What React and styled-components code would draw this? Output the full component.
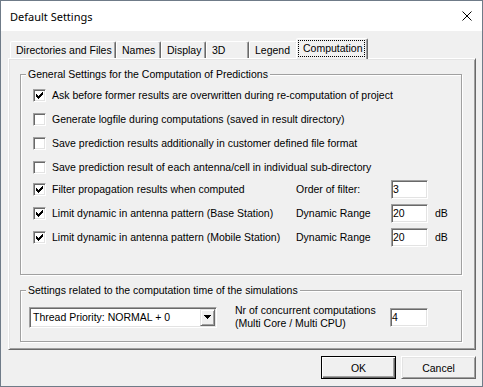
import React from 'react';
import styled, { createGlobalStyle } from 'styled-components';

const GlobalStyle = createGlobalStyle`
  html, body {
    margin: 0;
    padding: 0;
    background: #fff;
  }
  body {
    font-family: "Liberation Sans", Arial, sans-serif;
    font-size: 10.5px;
    color: #000;
  }
`;

const Window = styled.div`
  width: 483px;
  height: 387px;
  box-sizing: border-box;
  border: 1px solid #6f7b88;
  display: flex;
  flex-direction: column;
  background: #f0f0f0;
`;

const TitleBar = styled.div`
  height: 30px;
  flex: none;
  background: #fff;
  display: flex;
  align-items: center;
  justify-content: space-between;
  padding: 0 10px 0 9px;
`;

const Title = styled.span`
  font-family: "Noto Sans", "Open Sans", sans-serif;
  font-size: 11px;
  color: #000;
`;

const CloseIcon = () => (
  <svg width="10" height="10" viewBox="0 0 10 10">
    <path d="M0.5 0.5L9.5 9.5M9.5 0.5L0.5 9.5" stroke="#000" strokeWidth="1" />
  </svg>
);

const Body = styled.div`
  flex: 1;
  display: flex;
  flex-direction: column;
  padding: 6px 6px 7px 7px;
`;

const TabStrip = styled.div`
  height: 21px;
  display: flex;
  align-items: flex-end;
  padding-left: 2px;
  position: relative;
  z-index: 1;
`;

const Tab = styled.div`
  width: ${p => p.$w}px;
  height: ${p => (p.$active ? 21 : 17)}px;
  box-sizing: border-box;
  flex: none;
  border: 1px solid;
  border-bottom: none;
  border-color: #fff #696969 transparent #fff;
  border-radius: 2px 2px 0 0;
  box-shadow: inset -1px 0 #a0a0a0;
  background: #f0f0f0;
  padding-left: ${p => (p.$active ? 1 : 5)}px;
  line-height: 16px;
  white-space: nowrap;
  margin: ${p => (p.$active ? '0 -2px -1px -2px' : '0')};
  position: relative;
  z-index: ${p => (p.$active ? 2 : 1)};
`;

const FocusLabel = styled.span`
  display: block;
  margin: 1px 2px 0 0;
  height: 17px;
  box-sizing: border-box;
  border: 1px dotted #000;
  padding-left: 4px;
  line-height: 15px;
`;

const Panel = styled.div`
  height: 292px;
  box-sizing: border-box;
  border: 1px solid;
  border-color: #fff #696969 #696969 #fff;
  box-shadow: inset 1px 1px #e3e3e3, inset -1px -1px #a0a0a0;
  padding: 15px 0 0 11px;
  display: flex;
  flex-direction: column;
  gap: 15px;
`;

const GroupBox = styled.div`
  width: 442px;
  height: ${p => p.$h}px;
  box-sizing: border-box;
  border: 1px solid #a0a0a0;
  box-shadow: inset 1px 1px #fff, 1px 1px #fff;
  display: flex;
  flex-direction: column;
`;

const GroupTitle = styled.div`
  align-self: flex-start;
  margin: -7px 0 0 5px;
  padding: 0 2px;
  line-height: 13px;
  background: #f0f0f0;
  white-space: nowrap;
`;

const GroupContent = styled.div`
  display: flex;
  flex-direction: column;
  padding: ${p => p.$pad};
`;

const Row = styled.div`
  height: ${p => p.$h || 24}px;
  display: flex;
  align-items: center;
  white-space: nowrap;
`;

const RowSet = styled.div`
  display: flex;
  flex-direction: column;
  margin-top: -2px;
`;

const Box = styled.span`
  width: 13px;
  height: 13px;
  box-sizing: border-box;
  flex: none;
  background: #fff;
  border: 1px solid;
  border-color: #a0a0a0 #fff #fff #a0a0a0;
  box-shadow: inset 1px 1px #696969, inset -1px -1px #e3e3e3;
  display: flex;
  align-items: center;
  justify-content: center;
`;

const CheckLabel = styled.span`
  margin-left: 6px;
`;

const CheckCell = styled.div`
  width: 263px;
  display: flex;
  align-items: center;
`;

const FieldLabel = styled.span`
  width: 95px;
  flex: none;
`;

const Edit = styled.div`
  width: ${p => p.$w || 37}px;
  height: 19px;
  box-sizing: border-box;
  flex: none;
  background: #fff;
  border: 1px solid;
  border-color: #a0a0a0 #fff #fff #a0a0a0;
  box-shadow: inset 1px 1px #696969, inset -1px -1px #e3e3e3;
  padding-left: 1px;
  line-height: 17px;
`;

const Unit = styled.span`
  margin-left: 7px;
`;

const Combo = styled.div`
  width: 188px;
  height: 21px;
  box-sizing: border-box;
  flex: none;
  background: #fff;
  border: 1px solid;
  border-color: #a0a0a0 #fff #fff #a0a0a0;
  box-shadow: inset 1px 1px #696969, inset -1px -1px #e3e3e3;
  display: flex;
  align-items: center;
  justify-content: space-between;
  padding: 1px 1px 1px 3px;
`;

const DropButton = styled.span`
  width: 15px;
  height: 17px;
  box-sizing: border-box;
  background: #f0f0f0;
  border: 1px solid;
  border-color: #e3e3e3 #696969 #696969 #e3e3e3;
  box-shadow: inset 1px 1px #fff, inset -1px -1px #a0a0a0;
  display: flex;
  align-items: center;
  justify-content: center;
`;

const TwoLine = styled.div`
  width: 155px;
  margin-left: 18px;
  line-height: 13px;
`;

const ButtonRow = styled.div`
  display: flex;
  justify-content: flex-end;
  gap: 5px;
  margin-top: 6px;
`;

const Button = styled.button`
  width: 75px;
  height: 23px;
  box-sizing: border-box;
  padding: 0;
  font-family: "Liberation Sans", Arial, sans-serif;
  font-size: 10.5px;
  color: #000;
  background: #f0f0f0;
  border: 1px solid;
  border-color: ${p => (p.$default ? '#000' : '#fff #696969 #696969 #fff')};
  box-shadow: ${p =>
    p.$default
      ? 'inset 1px 1px #fff, inset -1px -1px #696969, inset -2px -2px #a0a0a0'
      : 'inset 1px 1px #e3e3e3, inset -1px -1px #a0a0a0'};
`;

const CheckMark = () => (
  <svg width="7" height="7" viewBox="0 0 7 7" shapeRendering="crispEdges">
    <path
      d="M0 2h1v3H0z M1 3h1v3H1z M2 4h1v3H2z M3 3h1v3H3z M4 2h1v3H4z M5 1h1v3H5z M6 0h1v3H6z"
      fill="#000"
    />
  </svg>
);

const Arrow = () => (
  <svg width="7" height="4" viewBox="0 0 7 4" shapeRendering="crispEdges">
    <path d="M0 0h7v1H0z M1 1h5v1H1z M2 2h3v1H2z M3 3h1v1H3z" fill="#000" />
  </svg>
);

const Check = ({ checked, children }) => (
  <CheckCell>
    <Box>{checked && <CheckMark />}</Box>
    <CheckLabel>{children}</CheckLabel>
  </CheckCell>
);

const tabs = [
  { label: 'Directories and Files', w: 106 },
  { label: 'Names', w: 45 },
  { label: 'Display', w: 45 },
  { label: '3D', w: 43 },
  { label: 'Legend', w: 49 },
  { label: 'Computation', w: 72, active: true },
];

const plainOptions = [
  { label: 'Ask before former results are overwritten during re-computation of project', checked: true },
  { label: 'Generate logfile during computations (saved in result directory)' },
  { label: 'Save prediction results additionally in customer defined file format' },
  { label: 'Save prediction result of each antenna/cell in individual sub-directory' },
];

const valueOptions = [
  { label: 'Filter propagation results when computed', field: 'Order of filter:', value: '3' },
  { label: 'Limit dynamic in antenna pattern (Base Station)', field: 'Dynamic Range', value: '20', unit: 'dB' },
  { label: 'Limit dynamic in antenna pattern (Mobile Station)', field: 'Dynamic Range', value: '20', unit: 'dB' },
];

export default function App() {
  return (
    <>
      <GlobalStyle />
      <Window>
        <TitleBar>
          <Title>Default Settings</Title>
          <CloseIcon />
        </TitleBar>
        <Body>
          <TabStrip>
            {tabs.map(t => (
              <Tab key={t.label} $w={t.w} $active={t.active}>
                {t.active ? <FocusLabel>{t.label}</FocusLabel> : t.label}
              </Tab>
            ))}
          </TabStrip>
          <Panel>
            <GroupBox $h={201}>
              <GroupTitle>General Settings for the Computation of Predictions</GroupTitle>
              <GroupContent $pad="2px 0 0 12px">
                {plainOptions.map(o => (
                  <Row key={o.label}>
                    <Check checked={o.checked}>{o.label}</Check>
                  </Row>
                ))}
                <RowSet>
                  {valueOptions.map(o => (
                    <Row key={o.label}>
                      <Check checked>{o.label}</Check>
                      <FieldLabel>{o.field}</FieldLabel>
                      <Edit>{o.value}</Edit>
                      {o.unit && <Unit>{o.unit}</Unit>}
                    </Row>
                  ))}
                </RowSet>
              </GroupContent>
            </GroupBox>
            <GroupBox $h={52}>
              <GroupTitle>Settings related to the computation time of the simulations</GroupTitle>
              <GroupContent $pad="7px 0 0 8px">
                <Row $h={26}>
                  <Combo>
                    <span>Thread Priority: NORMAL + 0</span>
                    <DropButton>
                      <Arrow />
                    </DropButton>
                  </Combo>
                  <TwoLine>
                    Nr of concurrent computations
                    <br />
                    (Multi Core / Multi CPU)
                  </TwoLine>
                  <Edit $w={38}>4</Edit>
                </Row>
              </GroupContent>
            </GroupBox>
          </Panel>
          <ButtonRow>
            <Button $default>OK</Button>
            <Button>Cancel</Button>
          </ButtonRow>
        </Body>
      </Window>
    </>
  );
}
